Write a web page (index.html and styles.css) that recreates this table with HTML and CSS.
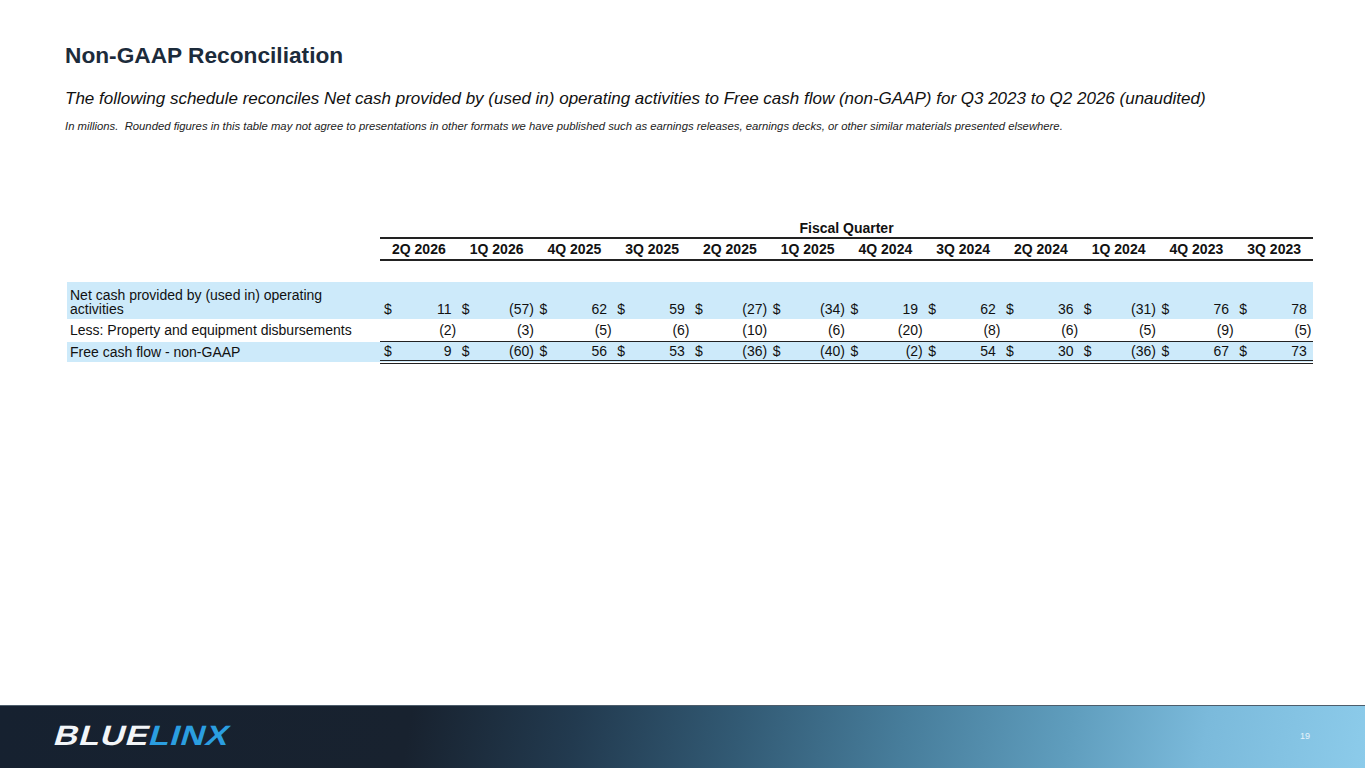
FILE: index.html
```html
<!DOCTYPE html>
<html lang="en">
<head>
<meta charset="utf-8">
<title>Non-GAAP Reconciliation</title>
<link rel="stylesheet" href="styles.css">
</head>
<body>
<div class="slide">
  <main class="content">
    <h1 class="title">Non-GAAP Reconciliation</h1>
    <p class="subtitle">The following schedule reconciles Net cash provided by (used in) operating activities to Free cash flow (non-GAAP) for Q3 2023 to Q2 2026 (unaudited)</p>
    <p class="note">In millions.&nbsp; Rounded figures in this table may not agree to presentations in other formats we have published such as earnings releases, earnings decks, or other similar materials presented elsewhere.</p>

    <table class="recon">
      <colgroup>
        <col class="c-label">
        <col class="c-val"><col class="c-val"><col class="c-val"><col class="c-val">
        <col class="c-val"><col class="c-val"><col class="c-val"><col class="c-val">
        <col class="c-val"><col class="c-val"><col class="c-val"><col class="c-val">
      </colgroup>
      <thead>
        <tr class="r-fiscal">
          <th></th>
          <th colspan="12">Fiscal Quarter</th>
        </tr>
        <tr class="r-head">
          <th></th>
          <th>2Q 2026</th><th>1Q 2026</th><th>4Q 2025</th><th>3Q 2025</th>
          <th>2Q 2025</th><th>1Q 2025</th><th>4Q 2024</th><th>3Q 2024</th>
          <th>2Q 2024</th><th>1Q 2024</th><th>4Q 2023</th><th>3Q 2023</th>
        </tr>
      </thead>
      <tbody>
        <tr class="r-gap"><td colspan="13"></td></tr>
        <tr class="r-op shade">
          <td class="lbl">Net cash provided by (used in) operating<br>activities</td>
          <td><div class="v"><span>$</span><span class="pos">11</span></div></td>
          <td><div class="v"><span>$</span><span>(57)</span></div></td>
          <td><div class="v"><span>$</span><span class="pos">62</span></div></td>
          <td><div class="v"><span>$</span><span class="pos">59</span></div></td>
          <td><div class="v"><span>$</span><span>(27)</span></div></td>
          <td><div class="v"><span>$</span><span>(34)</span></div></td>
          <td><div class="v"><span>$</span><span class="pos">19</span></div></td>
          <td><div class="v"><span>$</span><span class="pos">62</span></div></td>
          <td><div class="v"><span>$</span><span class="pos">36</span></div></td>
          <td><div class="v"><span>$</span><span>(31)</span></div></td>
          <td><div class="v"><span>$</span><span class="pos">76</span></div></td>
          <td><div class="v"><span>$</span><span class="pos">78</span></div></td>
        </tr>
        <tr class="r-capex">
          <td class="lbl">Less: Property and equipment disbursements</td>
          <td><div class="v"><span></span><span>(2)</span></div></td>
          <td><div class="v"><span></span><span>(3)</span></div></td>
          <td><div class="v"><span></span><span>(5)</span></div></td>
          <td><div class="v"><span></span><span>(6)</span></div></td>
          <td><div class="v"><span></span><span>(10)</span></div></td>
          <td><div class="v"><span></span><span>(6)</span></div></td>
          <td><div class="v"><span></span><span>(20)</span></div></td>
          <td><div class="v"><span></span><span>(8)</span></div></td>
          <td><div class="v"><span></span><span>(6)</span></div></td>
          <td><div class="v"><span></span><span>(5)</span></div></td>
          <td><div class="v"><span></span><span>(9)</span></div></td>
          <td><div class="v"><span></span><span>(5)</span></div></td>
        </tr>
        <tr class="r-fcf shade">
          <td class="lbl">Free cash flow - non-GAAP</td>
          <td><div class="v"><span>$</span><span class="pos">9</span></div></td>
          <td><div class="v"><span>$</span><span>(60)</span></div></td>
          <td><div class="v"><span>$</span><span class="pos">56</span></div></td>
          <td><div class="v"><span>$</span><span class="pos">53</span></div></td>
          <td><div class="v"><span>$</span><span>(36)</span></div></td>
          <td><div class="v"><span>$</span><span>(40)</span></div></td>
          <td><div class="v"><span>$</span><span>(2)</span></div></td>
          <td><div class="v"><span>$</span><span class="pos">54</span></div></td>
          <td><div class="v"><span>$</span><span class="pos">30</span></div></td>
          <td><div class="v"><span>$</span><span>(36)</span></div></td>
          <td><div class="v"><span>$</span><span class="pos">67</span></div></td>
          <td><div class="v"><span>$</span><span class="pos">73</span></div></td>
        </tr>
      </tbody>
    </table>
  </main>

  <footer class="footer">
    <div class="logo"><span class="logo-blue">BLUE</span><span class="logo-linx">LINX</span></div>
    <div class="page-num">19</div>
  </footer>
</div>
</body>
</html>
```

FILE: styles.css
```css
html, body {
  margin: 0;
  padding: 0;
  background: #ffffff;
}

body {
  font-family: "Liberation Sans", Arial, sans-serif;
  color: #111111;
}

.slide {
  width: 1365px;
  height: 768px;
  display: flex;
  flex-direction: column;
  overflow: hidden;
}

.content {
  flex: 1;
  padding: 0 0 0 65px;
}

.title {
  margin: 41px 0 0 0;
  font-size: 22.7px;
  line-height: 28px;
  font-weight: bold;
  color: #1c2b3b;
}

.subtitle {
  margin: 20px 0 0 0;
  font-size: 17px;
  line-height: 20px;
  font-style: italic;
  color: #111111;
}

.note {
  margin: 11px 0 0 0;
  font-size: 11.3px;
  line-height: 13px;
  font-style: italic;
  color: #222222;
}

/* ---- table ---- */
.recon {
  margin: 87px 0 0 2px;
  border-collapse: collapse;
  table-layout: fixed;
  width: 1246px;
  font-size: 14px;
  color: #111111;
}

.c-label { width: 313px; }
.c-val { width: 77.75px; }

.recon th,
.recon td {
  padding: 0;
}

.r-fiscal th {
  height: 17px;
  font-size: 14px;
  line-height: 17px;
  font-weight: bold;
  text-align: center;
  vertical-align: middle;
}

.r-fiscal th + th {
  border-bottom: 2px solid #222222;
}

.r-head th {
  height: 20px;
  font-size: 14px;
  line-height: 16px;
  font-weight: bold;
  text-align: center;
  vertical-align: middle;
}

.r-head th + th {
  border-bottom: 2px solid #222222;
}

.r-gap td {
  height: 21px;
}

.shade td {
  background: #cdeafa;
}

.lbl {
  padding: 0 0 0 3px !important;
  text-align: left;
  white-space: nowrap;
}

.r-op td {
  height: 34px;
  vertical-align: bottom;
  line-height: 13.4px;
}

.r-op .lbl {
  padding-bottom: 3px !important;
}

.r-op .v {
  padding-bottom: 3px;
}

.r-capex td {
  height: 22px;
  line-height: 16px;
  vertical-align: middle;
}

.r-capex td + td {
  border-bottom: 1.5px solid #222222;
}

.r-fcf td {
  height: 18px;
  line-height: 16px;
  vertical-align: middle;
}

.r-fcf td + td {
  border-bottom: 4px double #222222;
}

.v {
  display: flex;
  justify-content: space-between;
  padding: 0 1.5px 0 4px;
}

.v .pos {
  padding-right: 4.7px;
}

/* ---- footer ---- */
.footer {
  height: 62px;
  flex: none;
  display: flex;
  align-items: center;
  justify-content: space-between;
  padding: 0 55px 0 55px;
  background: linear-gradient(100deg,
    #162130 0%,
    #18222f 30%,
    #223a4f 42%,
    #325a74 54%,
    #477d9b 66%,
    #5f9dbd 78%,
    #7bbadb 88%,
    #8ccbea 100%);
  border-top: 1px solid #4d5d6b;
}

.logo {
  font-family: "Liberation Sans", Arial, sans-serif;
  font-weight: bold;
  font-size: 28px;
  line-height: 28px;
  letter-spacing: 0.7px;
  transform: scaleX(1.2) skewX(-14deg);
  transform-origin: left center;
  margin-top: -2px;
}

.logo-blue {
  color: #f2f5f8;
}

.logo-linx {
  color: #2b9ee0;
}

.page-num {
  font-size: 9px;
  color: #e6f3fb;
  margin-top: -2px;
}
```
